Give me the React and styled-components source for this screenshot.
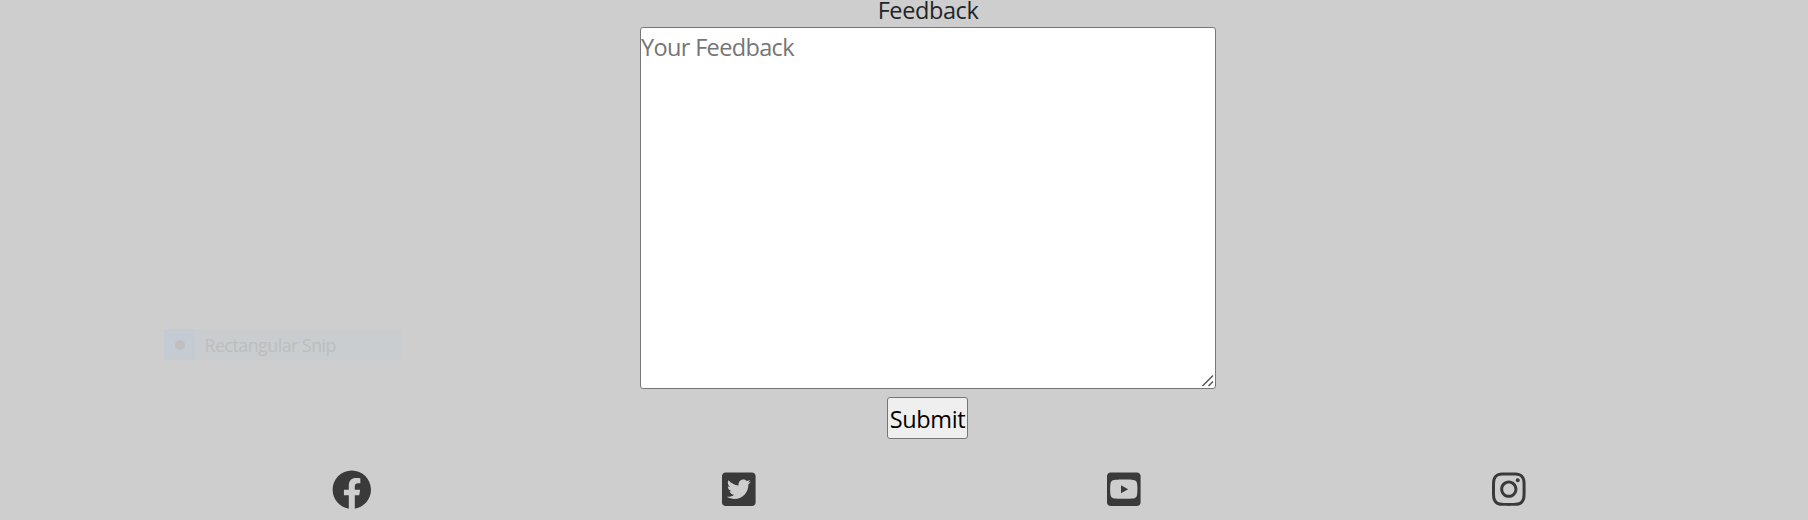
import React from "react";
import styled, { createGlobalStyle } from "styled-components";
import { FaFacebook, FaTwitterSquare, FaYoutubeSquare, FaInstagram } from "react-icons/fa";

const GlobalStyle = createGlobalStyle`
  * { box-sizing: border-box; }
  body {
    margin: 0;
    background: #cecece;
    color: #212529;
    font-family: "Segoe UI", "Open Sans", "Noto Sans", sans-serif;
    font-size: 24px;
    line-height: 36px;
    overflow: hidden;
  }
`;

const Page = styled.main`
  position: relative;
  height: 520px;
`;

const Form = styled.form`
  display: flex;
  flex-direction: column;
  align-items: center;
  padding-left: 48px;
`;

const Label = styled.label`
  height: 27px;
  line-height: 20px;
  font-size: 23.5px;
  letter-spacing: -0.4px;
`;

const MessageFrame = styled.div`
  position: relative;
  width: 576px;
  height: 362px;
`;

const Message = styled.textarea`
  display: block;
  width: 100%;
  height: 100%;
  padding: 1px 0;
  border: 1px solid #767676;
  border-radius: 3px;
  background: #fff;
  font: inherit;
  font-size: 23.5px;
  letter-spacing: -0.65px;
  resize: none;
  outline: none;

  &::placeholder {
    color: #757575;
    opacity: 1;
  }
`;

const Grip = styled.svg`
  position: absolute;
  right: 2px;
  bottom: 2px;
  width: 13px;
  height: 13px;
  pointer-events: none;
`;

const Submit = styled.button`
  width: 81px;
  height: 42px;
  margin: 8px 1px 0 0;
  padding: 2px 0 0;
  border: 1px solid #767676;
  border-radius: 3px;
  background: #efefef;
  color: #000;
  font: inherit;
  font-size: 23.5px;
  letter-spacing: -0.4px;
  white-space: nowrap;
`;

const Socials = styled.footer`
  display: flex;
  align-items: center;
  gap: 351.6px;
  margin-top: 31px;
  padding-left: 331.8px;
`;

const SocialLink = styled.a`
  display: flex;
  flex: none;
  width: ${(p) => (p.$round ? "39.6px" : "33.6px")};
  height: ${(p) => (p.$round ? "39.6px" : "38.4px")};
  margin-right: ${(p) => (p.$round ? "-1px" : "0")};
  margin-bottom: ${(p) => (p.$round ? "0" : "1px")};
  color: #3a3a3a;

  svg {
    width: 100%;
    height: 100%;
  }
`;

const Hint = styled.div`
  position: absolute;
  left: 164px;
  top: 329px;
  display: flex;
  align-items: center;
  width: 237px;
  height: 31px;
  background: #c9cdcf;
  color: #bdbdbd;
  font-size: 17.8px;
  letter-spacing: -0.5px;
`;

const HintIcon = styled.span`
  display: flex;
  align-items: center;
  justify-content: center;
  width: 31px;
  height: 31px;
  margin-right: 9.5px;
  background: #c5cbd2;

  &::after {
    content: "";
    width: 10px;
    height: 10px;
    border-radius: 50%;
    background: #bfbfbf;
  }
`;

const links = [
  { name: "Facebook", Icon: FaFacebook, round: true },
  { name: "Twitter", Icon: FaTwitterSquare },
  { name: "YouTube", Icon: FaYoutubeSquare },
  { name: "Instagram", Icon: FaInstagram },
];

export default function App() {
  return (
    <Page>
      <GlobalStyle />
      <Form>
        <Label htmlFor="feedback">Feedback</Label>
        <MessageFrame>
          <Message id="feedback" placeholder="Your Feedback" />
          <Grip viewBox="0 0 13 13" fill="none" stroke="#555" strokeWidth="1.5">
            <path d="M1.5 12L12 1.5M7.5 12L12 7.5" />
          </Grip>
        </MessageFrame>
        <Submit type="button">Submit</Submit>
      </Form>
      <Socials>
        {links.map(({ name, Icon, round }) => (
          <SocialLink key={name} $round={round} aria-label={name}>
            <Icon />
          </SocialLink>
        ))}
      </Socials>
      <Hint>
        <HintIcon />
        Rectangular Snip
      </Hint>
    </Page>
  );
}
